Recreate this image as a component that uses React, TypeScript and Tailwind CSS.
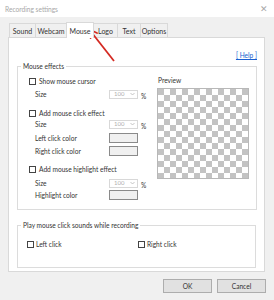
import type { ReactNode } from 'react'

const tabs = [
  { label: 'Sound', w: 'w-[27px]' },
  { label: 'Webcam', w: 'w-[32px]' },
  { label: 'Mouse', w: 'w-[28px]', active: true },
  { label: 'Logo', w: 'w-[25px]' },
  { label: 'Text', w: 'w-[24px]' },
  { label: 'Options', w: 'w-[28px]' },
]

function Check({ label, gap = 'gap-[3px]' }: { label: string; gap?: string }) {
  return (
    <div className={`flex items-center ${gap} h-[10px]`}>
      <span className="w-[7px] h-[7px] border border-[#444] bg-white" />
      <span>{label}</span>
    </div>
  )
}

function Dropdown() {
  return (
    <div className="flex items-center gap-[3px]">
      <div className="w-[29px] h-[9px] border border-[#d8d8d8] flex items-center justify-between pl-[4px] pr-[2px] text-[#b0b0b0] text-[6px]">
        <span>100</span>
        <svg width="5" height="4" viewBox="0 0 5 4">
          <path d="M0.5 1 L2.5 3 L4.5 1" fill="none" stroke="#b8b8b8" strokeWidth="0.8" />
        </svg>
      </div>
      <span className="mt-[3px]">%</span>
    </div>
  )
}

function Swatch() {
  return <div className="w-[29px] h-[10px] border border-[#8a8a8a] bg-[#f0f0f0]" />
}

function Row({ label, children }: { label: string; children?: ReactNode }) {
  return (
    <div className="flex items-center h-[10px] pl-[6px]">
      <span className="w-[74px]">{label}</span>
      {children}
    </div>
  )
}

export default function App() {
  return (
    <div className="relative w-[274px] h-[300px] bg-[#f0f0f0] text-[#333] font-['Lato',sans-serif] text-[6.6px] leading-[10px] overflow-hidden">
      <div className="h-[17px] bg-white flex items-center justify-between pl-[5px] pr-[6px] text-[#a8a8a8]">
        <span>Recording settings</span>
        <span className="text-[9px]">✕</span>
      </div>

      <div className="flex items-end pl-[9px] mt-[5px] h-[15px] text-[7px]">
        {tabs.map((t) => (
          <div
            key={t.label}
            className={
              t.active
                ? `${t.w} h-[16px] -mb-px -ml-px z-10 bg-white border border-b-0 border-[#d9d9d9] flex items-center justify-center`
                : `${t.w} h-[14px] bg-[#f0f0f0] border border-b-0 border-[#d9d9d9] -ml-px first:ml-0 flex items-center justify-center`
            }
          >
            {t.label}
          </div>
        ))}
      </div>

      <div className="mx-[8px] mr-[9px] h-[235px] bg-white border border-[#d9d9d9] pt-[12px] pr-[7px]">
        <div className="flex justify-end h-[10px]">
          <span className="text-[#1a5fd0] underline">[ Help ]</span>
        </div>

        <fieldset className="ml-[8px] mr-0 h-[149px] border border-[#dcdcdc] mt-[1px]">
          <legend className="ml-[3px] px-[2px]">Mouse effects</legend>
          <div className="flex">
            <div className="w-[139px] pl-[11px] pt-[5px]">
              <Check label="Show mouse cursor" />
              <div className="mt-[3px]">
                <Row label="Size">
                  <Dropdown />
                </Row>
              </div>
              <div className="mt-[9px]">
                <Check label="Add mouse click effect" />
              </div>
              <div className="mt-px">
                <Row label="Size">
                  <Dropdown />
                </Row>
              </div>
              <div className="mt-[4px]">
                <Row label="Left click color">
                  <Swatch />
                </Row>
              </div>
              <div className="mt-[3px]">
                <Row label="Right click color">
                  <Swatch />
                </Row>
              </div>
              <div className="mt-[8px]">
                <Check label="Add mouse highlight effect" />
              </div>
              <div className="mt-[4px]">
                <Row label="Size">
                  <Dropdown />
                </Row>
              </div>
              <div className="mt-[2px]">
                <Row label="Highlight color">
                  <Swatch />
                </Row>
              </div>
            </div>
            <div className="w-[92px] pt-[4px]">
              <div className="pl-px h-[10px]">Preview</div>
              <div className="mt-[3px] w-[92px] h-[91px] border border-[#b8b8b8] bg-[conic-gradient(#fff_25%,#c3c3c3_0_50%,#fff_0_75%,#c3c3c3_0)] bg-size-[12px_12px]" />
            </div>
          </div>
        </fieldset>

        <fieldset className="ml-[8px] mr-px mt-[10px] h-[48px] border border-[#dcdcdc]">
          <legend className="ml-[3px] px-[2px]">Play mouse click sounds while recording</legend>
          <div className="flex pl-[9px] pt-[9px]">
            <div className="w-[111px]">
              <Check label="Left click" gap="gap-[2px]" />
            </div>
            <Check label="Right click" gap="gap-[2px]" />
          </div>
        </fieldset>
      </div>

      <div className="flex justify-end gap-[5px] pr-[8px] mt-[7px]">
        <button className="w-[49px] h-[14px] bg-[#e1e1e1] border border-[#adadad]">OK</button>
        <button className="w-[49px] h-[14px] bg-[#e1e1e1] border border-[#adadad]">Cancel</button>
      </div>

      <svg className="absolute left-0 top-0 pointer-events-none" width="274" height="300">
        <line x1="114" y1="61" x2="92" y2="33" stroke="#d42a22" strokeWidth="1.8" />
        <path d="M89.5 29.5 L90.5 38 M89.5 29.5 L97 33" stroke="#d42a22" strokeWidth="1.8" fill="none" strokeLinecap="round" />
      </svg>
    </div>
  )
}
